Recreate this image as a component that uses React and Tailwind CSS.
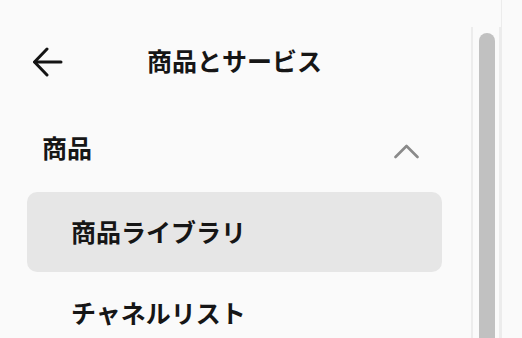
const font = { fontFamily: '"Noto Sans CJK JP", "Noto Sans", sans-serif' };

function ArrowBack() {
  return (
    <svg width="30" height="30" viewBox="0 0 30 30" fill="none" stroke="#141414" strokeWidth="3" strokeLinecap="round" strokeLinejoin="round">
      <path d="M28 15H2" />
      <path d="M14 2 1.5 15 14 28" />
    </svg>
  );
}

function ChevronUp() {
  return (
    <svg width="25" height="15" viewBox="0 0 25 15" fill="none" stroke="#8a8a8a" strokeWidth="2.6" strokeLinecap="round" strokeLinejoin="round">
      <path d="M1.5 13 12.5 2 23.5 13" />
    </svg>
  );
}

export default function App() {
  return (
    <div className="flex h-[338px] w-[522px] overflow-hidden bg-[#fafafa] text-[#161616]" style={font}>
      <div className="flex w-[502px] border-r border-[#ececec]">
        {/* contenu */}
        <div className="flex w-[471px] flex-col pl-[27px] pr-[29px] pt-[20px]">
          <div className="grid h-[80px] shrink-0 grid-cols-[1fr_auto_1fr] items-center">
            <div className="pl-[6px] pt-[3px]">
              <ArrowBack />
            </div>
            <h1 className="text-[25px] font-bold leading-none">商品とサービス</h1>
            <div />
          </div>

          <div className="mt-[11px] flex h-[72px] shrink-0 items-center justify-between pl-[15px] pr-[23px]">
            <span className="text-[25px] font-bold leading-none">商品</span>
            <div className="pt-[9px]">
              <ChevronUp />
            </div>
          </div>

          <div className="mt-[9px] flex h-[80px] shrink-0 items-center rounded-[10px] bg-[#e6e6e6] px-[44px] pb-[2px]">
            <span className="text-[25px] font-bold leading-none">商品ライブラリ</span>
          </div>
          <div className="flex h-[80px] shrink-0 items-center px-[44px]">
            <span className="text-[25px] font-bold leading-none">チャネルリスト</span>
          </div>
        </div>

        {/* barre de défilement */}
        <div className="flex flex-1 pt-[27px]">
          <div className="flex flex-1 border-x-2 border-[#ececec] pl-[6px] pt-[6px]">
            <div className="h-[400px] w-[16px] shrink-0 rounded-t-full bg-[#c1c1c1]" />
          </div>
        </div>
      </div>
      <div className="flex-1 bg-[#fafafa]" />
    </div>
  );
}
